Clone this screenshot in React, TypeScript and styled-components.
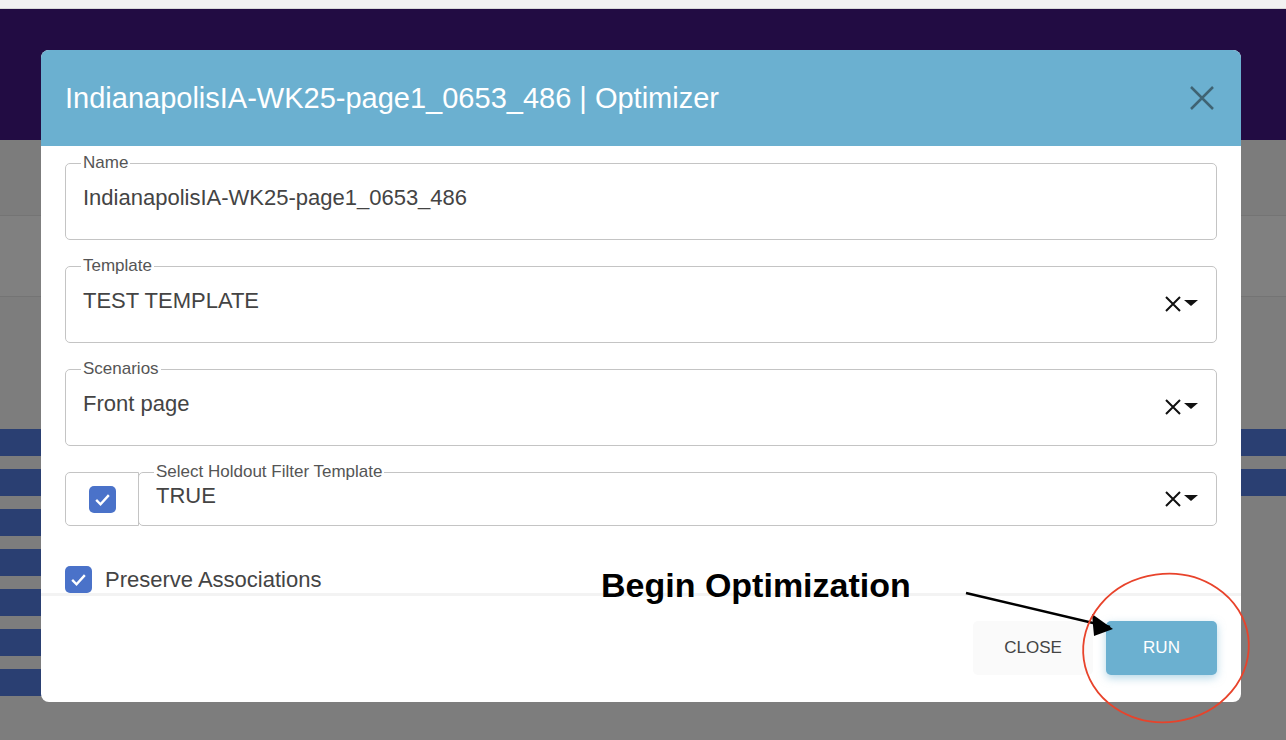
import React from 'react';
import styled, { createGlobalStyle } from 'styled-components';

const Global = createGlobalStyle`
  html, body { margin: 0; padding: 0; }
  body { font-family: 'Liberation Sans', Arial, sans-serif; background: #7b7b7b; overflow: hidden; }
`;

const Page = styled.div`
  position: relative;
  width: 1286px;
  height: 740px;
  overflow: hidden;
  display: flex;
  flex-direction: column;
  background: #7d7d7d;
`;

const TopStrip = styled.div`
  height: 8px;
  background: #f2f2f2;
  border-bottom: 1px solid #d8d8d8;
`;

const AppBar = styled.div`
  height: 131px;
  background: #220c43;
`;

const Band = styled.div<{ $h: number; $bg: string }>`
  height: ${({ $h }) => $h}px;
  background: ${({ $bg }) => $bg};
  border-bottom: 1px solid #747474;
`;

const ChartArea = styled.div`
  flex: 1;
  display: flex;
  justify-content: space-between;
  padding-top: 132px;
`;

const BarCol = styled.div<{ $align: string }>`
  display: flex;
  flex-direction: column;
  align-items: ${({ $align }) => $align};
  gap: 13px;
`;

const Bar = styled.div<{ $w: number }>`
  width: ${({ $w }) => $w}px;
  height: 27px;
  background: #2a3f72;
`;

const Modal = styled.div`
  position: absolute;
  left: 41px;
  top: 50px;
  width: 1200px;
  height: 652px;
  background: #fff;
  border-radius: 8px;
  overflow: hidden;
  display: flex;
  flex-direction: column;
`;

const Header = styled.div`
  height: 96px;
  background: #6bb0d0;
  display: flex;
  align-items: center;
  justify-content: space-between;
  padding: 0 24px;
  box-sizing: border-box;
  color: #fff;
  font-size: 29px;
`;

const CloseX = styled.button`
  background: none;
  border: none;
  padding: 0;
  width: 30px;
  height: 30px;
  color: #3f6373;
  cursor: pointer;
`;

const Body = styled.div`
  padding: 17px 24px 0;
  display: flex;
  flex-direction: column;
  gap: 26px;
  flex: 1;
`;

const Field = styled.fieldset`
  margin: 0;
  flex: 1;
  height: 54px;
  box-sizing: border-box;
  border: 1px solid #c4c4c4;
  border-radius: 5px;
  padding: 0 17px;
  display: flex;
  align-items: center;
  position: relative;
  top: -8px;
  height: 62px;
  margin-bottom: -8px;
`;

const Legend = styled.legend`
  font-size: 17px;
  color: #555;
  padding: 0 2px;
  margin-left: -2px;
  line-height: 16px;
`;

const Value = styled.div`
  font-size: 22px;
  color: #444;
  flex: 1;
  margin-top: -14px;
`;

const Adorn = styled.div`
  display: flex;
  align-items: center;
  margin-top: -10px;
`;

const Row = styled.div`
  display: flex;
`;

const CheckCell = styled.div`
  width: 74px;
  height: 54px;
  box-sizing: border-box;
  border: 1px solid #c4c4c4;
  border-radius: 5px 0 0 5px;
  display: flex;
  align-items: center;
  justify-content: center;
`;

const Check = styled.span`
  width: 27px;
  height: 27px;
  border-radius: 5px;
  background: #4a72c9;
  display: inline-flex;
  align-items: center;
  justify-content: center;
`;

const CheckLabel = styled.label`
  display: flex;
  align-items: center;
  gap: 13px;
  font-size: 22px;
  color: #444;
  margin-top: 14px;
`;

const Footer = styled.div`
  height: 104px;
  border-top: 3px solid #f3f3f3;
  display: flex;
  justify-content: flex-end;
  align-items: center;
  gap: 13px;
  padding: 0 24px 2px;
`;

const Button = styled.button<{ $primary?: boolean }>`
  height: 54px;
  width: ${({ $primary }) => ($primary ? 111 : 120)}px;
  border: none;
  border-radius: 5px;
  font-family: inherit;
  font-size: 17px;
  background: ${({ $primary }) => ($primary ? '#6bb0d0' : '#fafafa')};
  color: ${({ $primary }) => ($primary ? '#fff' : '#444')};
  box-shadow: ${({ $primary }) => ($primary ? '0 3px 8px rgba(107,176,208,0.5)' : 'none')};
`;

const Annotation = styled.div`
  position: absolute;
  left: 601px;
  top: 566px;
  font-size: 34px;
  font-weight: bold;
  color: #000;
`;

const Overlay = styled.svg`
  position: absolute;
  left: 0;
  top: 0;
  pointer-events: none;
`;

const ClearArrow = () => (
  <Adorn>
    <svg width="20" height="20" viewBox="0 0 20 20">
      <path d="M3 4 L17 18 M17 4 L3 18" stroke="#111" strokeWidth="2" />
    </svg>
    <svg width="16" height="12" viewBox="0 0 16 12">
      <path d="M1 3 L15 3 L8 9 Z" fill="#111" />
    </svg>
  </Adorn>
);

const Tick = () => (
  <svg width="19" height="19" viewBox="0 0 24 24">
    <path d="M4 12.5 L9.5 18 L20 6.5" stroke="#fff" strokeWidth="3" fill="none" />
  </svg>
);

export default function App() {
  const left = [211, 211, 211, 211, 211, 211, 211];
  return (
    <>
      <Global />
      <Page>
        <TopStrip />
        <AppBar />
        <Band $h={75} $bg="#7c7c7c" />
        <Band $h={80} $bg="#808080" />
        <ChartArea>
          <BarCol $align="flex-start">
            {left.map((w, i) => <Bar key={i} $w={i === 6 ? 211 : 45} />)}
          </BarCol>
          <BarCol $align="flex-end">
            <Bar $w={45} />
            <Bar $w={45} />
          </BarCol>
        </ChartArea>

        <Modal>
          <Header>
            <span>IndianapolisIA-WK25-page1_0653_486 | Optimizer</span>
            <CloseX aria-label="close">
              <svg width="30" height="30" viewBox="0 0 30 30">
                <path d="M4 4 L26 26 M26 4 L4 26" stroke="currentColor" strokeWidth="2.5" />
              </svg>
            </CloseX>
          </Header>
          <Body>
            <Field>
              <Legend>Name</Legend>
              <Value>IndianapolisIA-WK25-page1_0653_486</Value>
            </Field>
            <Field>
              <Legend>Template</Legend>
              <Value>TEST TEMPLATE</Value>
              <ClearArrow />
            </Field>
            <Field>
              <Legend>Scenarios</Legend>
              <Value>Front page</Value>
              <ClearArrow />
            </Field>
            <Row>
              <CheckCell><Check><Tick /></Check></CheckCell>
              <Field style={{ borderRadius: '5px', marginLeft: '-1px' }}>
                <Legend>Select Holdout Filter Template</Legend>
                <Value>TRUE</Value>
                <ClearArrow />
              </Field>
            </Row>
            <CheckLabel>
              <Check><Tick /></Check>
              Preserve Associations
            </CheckLabel>
          </Body>
          <Footer>
            <Button>CLOSE</Button>
            <Button $primary>RUN</Button>
          </Footer>
        </Modal>

        <Annotation>Begin Optimization</Annotation>
        <Overlay width="1286" height="740" viewBox="0 0 1286 740">
          <path d="M966 593 L1110 627" stroke="#000" strokeWidth="2.5" />
          <path d="M1113 629 L1092 614 L1094 636 Z" fill="#000" />
          <ellipse cx="1166" cy="648" rx="83" ry="74" fill="none" stroke="#e8432b" strokeWidth="1.8" transform="rotate(-8 1166 648)" />
        </Overlay>
      </Page>
    </>
  );
}
